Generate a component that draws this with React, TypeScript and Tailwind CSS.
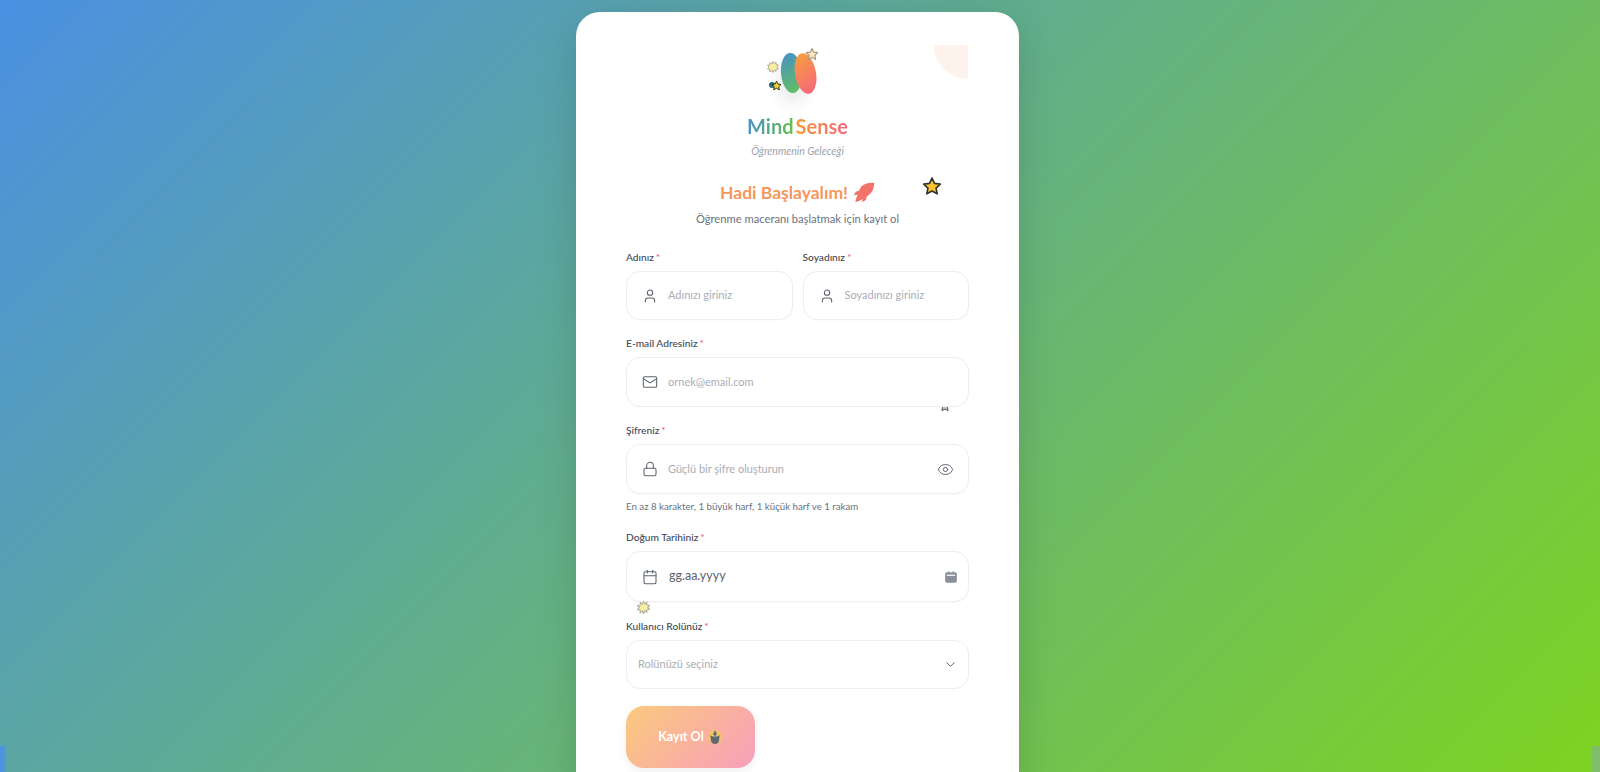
import React from 'react'
import { User, Mail, Lock, Eye, Calendar, ChevronDown } from 'lucide-react'

const Sparkle = ({ className }: { className: string }) => (
  <svg viewBox="0 0 24 24" className={className}>
    <path d="M12 1l2.400 4.400L18 2.600l.3 4.800 4.700.6-3 3.900 3 3.600-4.700.7-.4 4.800-3.600-2.900L12 23l-2.500-4.300-3.600 2.800-.3-4.800-4.600-.7 3-3.800-3-3.800 4.700-.7.4-4.800 3.500 2.900z" fill="#f8f0a0" stroke="#b0aa98" strokeWidth="2" />
  </svg>
)

const Star = ({ className, fill, stroke }: { className: string; fill: string; stroke: string }) => (
  <svg viewBox="0 0 24 24" className={className}>
    <path d="M12 2.500l3 6.300 6.900.9-5 4.800 1.300 6.900-6.200-3.400-6.200 3.400 1.300-6.900-5-4.800 6.900-.9z" fill={fill} stroke={stroke} strokeWidth="2" strokeLinejoin="round" />
  </svg>
)

const Label = ({ text }: { text: string }) => (
  <div className="text-[10.200px] leading-[14px] font-medium text-[#3f4753] mb-[7px]">
    {text}
    <span className="text-[#f0567f] ml-[2px]">*</span>
  </div>
)

const Field = ({ icon, text, right, dark, height }: { icon: React.ReactNode; text: string; right?: React.ReactNode; dark?: boolean; height: string }) => (
  <div className={`relative ${height} flex items-center rounded-[14px] border border-[#eceef1] bg-white pl-[15px] pr-[14px] shadow-[0_1px_2px_rgba(0,0,0,0.02)]`}>
    <span className="w-[26px] shrink-0 text-[#5f6670] flex">{icon}</span>
    <span className={`flex-1 ${dark ? 'text-[12.500px] text-[#5b626d] pl-[1px]' : 'text-[11px] text-[#a9aeb6]'}`}>{text}</span>
    {right}
  </div>
)

const App = () => {
  return (
    <div
      className="relative h-[772px] w-full overflow-hidden bg-[linear-gradient(135deg,#4a90e2,#7ed321)] flex justify-center pt-[12px] pr-[5px]"
      style={{ fontFamily: 'Lato, "Noto Sans", sans-serif' }}
    >
      <div className="absolute left-0 top-[746px] h-[26px] w-[5px] bg-[#4f93dc]" />
      <div className="absolute right-0 top-[746px] h-[26px] w-[8px] bg-[#7fbe6c]" />

      <div className="relative w-[443px] h-[800px] shrink-0 rounded-[24px] bg-white shadow-[0_10px_40px_rgba(0,0,0,0.15)] px-[50px] pt-[33px]">
        <div className="relative">
          {/* corner decoration */}
          <div className="absolute right-[1px] top-0 h-[34px] w-[34px] rounded-bl-[34px] bg-[#fdf3ec]" />

          {/* logo */}
          <div className="relative h-[60px] w-[70px] mx-auto">
            <div className="absolute left-[18px] top-[8px] h-[40px] w-[21px] rotate-[-5deg] rounded-[50%] bg-[linear-gradient(160deg,#4a90c8,#62c25a)] shadow-[0_10px_18px_rgba(0,0,0,0.12)]" />
            <div className="absolute left-[32px] top-[8px] h-[41px] w-[21px] rotate-[-10deg] rounded-[50%] bg-[linear-gradient(160deg,#f9a13c,#f4647f)]" />
            <Sparkle className="absolute left-[4px] top-[16px] h-[12px] w-[12px]" />
            <Star className="absolute left-[42px] top-[2px] h-[14px] w-[14px]" fill="#fbe6bd" stroke="#a39a85" />
            <div className="absolute left-[6px] top-[37px] h-[6px] w-[6px] rounded-full bg-[#2c6f78]" />
            <Star className="absolute left-[8px] top-[35px] h-[11px] w-[11px]" fill="#f8d820" stroke="#222" />
          </div>

          <div className="mt-[7px] text-center text-[20px] leading-[28px] font-bold">
            <span className="bg-[linear-gradient(90deg,#4a90c8,#67c24a)] bg-clip-text text-transparent">Mind</span>
            <span className="ml-[2px] bg-[linear-gradient(90deg,#f59a35,#f4677f)] bg-clip-text text-transparent">Sense</span>
          </div>
          <div className="mt-[4px] text-center text-[10.500px] leading-[14px] italic text-[#9ca3af]">Öğrenmenin Geleceği</div>

          {/* heading */}
          <div className="mt-[22px] flex justify-center items-center gap-[5px] text-[17.500px] leading-[26px] font-bold text-[#f5975c]">
            Hadi Başlayalım!
            <svg viewBox="0 0 24 24" className="h-[22px] w-[22px]">
              <path d="M23 1c-6-.5-11 1-14 4L6.500 9.500 3 10.500 1 14.500l4-.5L3.500 18l-1 4 4.500-1.500 3.500-2-.5 3.500 4-2.500 1-3.500 4-3.500c3-3 4.500-8 4-13z" fill="#f3736c" />
            </svg>
          </div>
          <Star className="absolute left-[296px] top-[131px] h-[20px] w-[20px]" fill="#fbc531" stroke="#333" />
          <div className="mt-[5px] text-center text-[11.200px] leading-[16px] text-[#6b7280]">Öğrenme maceranı başlatmak için kayıt ol</div>

          {/* form */}
          <div className="mt-[23px] grid grid-cols-2 gap-[10px]">
            <div>
              <Label text="Adınız" />
              <Field height="h-[49px]" icon={<User size={16} strokeWidth={1.6} />} text="Adınızı giriniz" />
            </div>
            <div>
              <Label text="Soyadınız" />
              <Field height="h-[49px]" icon={<User size={16} strokeWidth={1.6} />} text="Soyadınızı giriniz" />
            </div>
          </div>

          <Star className="absolute left-[313px] top-[355px] h-[12px] w-[12px]" fill="#c9c9c9" stroke="#555" />
          <div className="mt-[16px]">
            <Label text="E-mail Adresiniz" />
            <Field height="h-[50px]" icon={<Mail size={16} strokeWidth={1.6} />} text="ornek@email.com" />
          </div>

          <div className="mt-[16px]">
            <Label text="Şifreniz" />
            <Field height="h-[50px]" icon={<Lock size={16} strokeWidth={1.6} />} text="Güçlü bir şifre oluşturun" right={<Eye size={17} strokeWidth={1.4} className="text-[#5f6670]" />} />
            <div className="mt-[5px] text-[9.700px] leading-[14px] text-[#6b7280]">En az 8 karakter, 1 büyük harf, 1 küçük harf ve 1 rakam</div>
          </div>

          <div className="mt-[17px]">
            <Label text="Doğum Tarihiniz" />
            <Field
              height="h-[51px]"
              icon={<Calendar size={16} strokeWidth={1.6} />}
              text="gg.aa.yyyy"
              dark
              right={
                <svg viewBox="0 0 24 24" className="h-[14px] w-[14px] mr-[-4px]">
                  <path d="M5 4h2V2h2v2h6V2h2v2h2a3 3 0 013 3v12a3 3 0 01-3 3H5a3 3 0 01-3-3V7a3 3 0 013-3z" fill="#8a909a" />
                  <rect x="5" y="8" width="14" height="2" fill="#fff" />
                </svg>
              }
            />
          </div>
          <Sparkle className="absolute left-[11px] top-[556px] h-[13px] w-[13px]" />

          <div className="mt-[17px]">
            <Label text="Kullanıcı Rolünüz" />
            <div className="h-[49px] flex items-center justify-between rounded-[14px] border border-[#eceef1] bg-white pl-[11px] pr-[10px]">
              <span className="text-[11px] text-[#a9aeb6]">Rolünüzü seçiniz</span>
              <ChevronDown size={15} strokeWidth={1.6} className="text-[#5f6670]" />
            </div>
          </div>

          <div className="mt-[17px] flex h-[62px] w-[129px] items-center justify-center gap-[3px] rounded-[18px] bg-[linear-gradient(135deg,#fbc97c,#f89fbc)] text-[12.600px] font-bold text-white shadow-[0_4px_10px_rgba(0,0,0,0.06)]">
            Kayıt Ol
            <svg viewBox="0 0 24 24" className="h-[16px] w-[16px]">
              <circle cx="12" cy="12" r="10.500" fill="#f3c564" />
              <path d="M5 9c2 3 12 3 14 0l-1 9c-1 3-3 4.500-6 4.500S7 21 6 18z" fill="#5d6874" />
              <path d="M12 2l3 6-3 3-3-3z" fill="#5d6874" />
            </svg>
          </div>
        </div>
      </div>
    </div>
  )
}

export default App
